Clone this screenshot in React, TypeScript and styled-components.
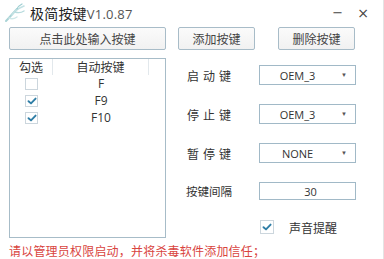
import React from "react";
import styled, { createGlobalStyle } from "styled-components";

const Global = createGlobalStyle`
  html, body { margin: 0; padding: 0; background: #fff; }
  body { width: 384px; height: 259px; overflow: hidden;
    font-family: "Microsoft YaHei", "Noto Sans CJK SC", "Noto Sans", sans-serif; color: #333; }
  * { box-sizing: border-box; }
`;

const Window = styled.div`
  width: 384px; height: 259px; position: relative;
  border-right: 1px solid #e4e4e4;
  display: flex; flex-direction: column;
`;

const TitleBar = styled.div`
  height: 28px; display: flex; align-items: center; padding: 0 0 2px 4px;
`;
const Title = styled.div`
  margin-left: 4px; font-size: 14px; color: #222; letter-spacing: 0.2px;
  span { color: #555; font-family: "Open Sans", "Noto Sans", sans-serif; font-size: 13px; }
`;
const WinCtrls = styled.div`
  margin-left: auto; display: flex; gap: 14px; padding-right: 14px; align-items: center;
  color: #444; font-family: "DejaVu Sans", sans-serif;
`;
const Ctrl = styled.span<{ $size: number }>`
  font-size: ${p => p.$size}px; line-height: 1;
`;

const ButtonRow = styled.div`
  display: flex; padding-left: 9px; height: 23px;
`;
const Btn = styled.button<{ $ml?: number; $w: number }>`
  width: ${p => p.$w}px; height: 23px; margin-left: ${p => p.$ml ?? 0}px;
  border: 1px solid #a8bcc8; border-radius: 2px;
  background: linear-gradient(#fbfbfb, #f1f1f1);
  font-family: inherit; font-size: 12px; color: #444; padding: 0;
`;

const Main = styled.div`
  display: flex; margin-top: 8px; height: 180px;
`;

const ListBox = styled.div`
  margin-left: 9px; width: 157px; height: 180px;
  border: 1px solid #a7bcc8; background: #fff;
  display: flex; flex-direction: column;
`;
const Row = styled.div<{ $header?: boolean }>`
  display: grid; grid-template-columns: 43px 96px 1fr;
  height: ${p => (p.$header ? 16 : 17)}px; align-items: center;
  font-size: 12px; color: #333;
`;
const HeadCell = styled.div<{ $sep?: boolean }>`
  height: 100%; display: flex; align-items: center; justify-content: center;
  border-right: ${p => (p.$sep ? "1px solid #e2e8ec" : "none")};
  line-height: 1;
`;
const Cell = styled.div`
  display: flex; align-items: center; justify-content: center;
  font-family: "Open Sans", "Noto Sans", sans-serif; font-size: 12px;
`;
const CheckCell = styled.div`
  display: flex; align-items: center; justify-content: center;
`;

const Box = styled.div`
  width: 13px; height: 12px; border: 1px solid #ccd6dd; background: #fff;
  display: flex; align-items: center; justify-content: center;
`;

const Tick = () => (
  <svg width="10" height="8" viewBox="0 0 10 8">
    <path d="M1.5 4.2 L4 6.4 L8.6 1.6" fill="none" stroke="#2f7ea6" strokeWidth="1.9" strokeLinecap="round" strokeLinejoin="round" />
  </svg>
);

const Check = ({ on }: { on: boolean }) => <Box>{on && <Tick />}</Box>;

const Panel = styled.div`
  margin-left: 12px; padding-top: 7px;
  display: grid; grid-template-columns: 81px 97px;
  grid-template-rows: 20px 20px 20px 18px 16px;
  row-gap: 19px;
  align-items: center;
`;
const Label = styled.div<{ $spaced?: boolean }>`
  padding-left: ${p => (p.$spaced ? 9 : 8)}px;
  font-size: ${p => (p.$spaced ? 12 : 11.5)}px;
  letter-spacing: ${p => (p.$spaced ? 4 : 0)}px; color: #333;
`;
const Select = styled.div`
  height: 20px; border: 1px solid #a1b9c7; background: #fff;
  display: flex; align-items: center;
  font-family: "Open Sans", "Noto Sans", sans-serif; font-size: 11px; color: #333;
`;
const SelText = styled.div`
  flex: 1; text-align: center; padding-left: 2px;
`;
const Arrow = styled.div`
  width: 22px; text-align: center; font-size: 6px; color: #555;
`;
const Input = styled.div`
  height: 18px; border: 1px solid #a1b9c7; background: #fff;
  display: flex; align-items: center; justify-content: center;
  font-family: "Open Sans", "Noto Sans", sans-serif; font-size: 11px; color: #333;
  padding-left: 6px;
`;
const SoundRow = styled.div`
  grid-column: 2; display: flex; align-items: center; gap: 15px; padding-left: 1px;
  font-size: 12px; color: #333;
`;
const BigBox = styled(Box)`
  width: 14px; height: 14px;
`;

const Warning = styled.div`
  margin: 4px 0 0 9px; font-size: 12px; color: #d9443e; letter-spacing: 0.2px;
`;

const Logo = () => (
  <svg width="22" height="20" viewBox="0 0 22 20">
    <path d="M2 18 C6 14, 9 10, 13 6" stroke="#a9d3d6" strokeWidth="2" fill="none" strokeLinecap="round" />
    <path d="M8 12 C10 8, 15 5, 20 3" stroke="#c4e2e4" strokeWidth="1.6" fill="none" strokeLinecap="round" />
    <path d="M11 9 C14 10, 17 10, 20 8" stroke="#b6dadd" strokeWidth="1.4" fill="none" strokeLinecap="round" />
    <path d="M5 15 C7 16, 10 16, 13 14" stroke="#cfe7e8" strokeWidth="1.4" fill="none" strokeLinecap="round" />
    <path d="M13 6 C14 3, 16 2, 18 1" stroke="#9ccdd1" strokeWidth="1.2" fill="none" strokeLinecap="round" />
  </svg>
);

const rows = [
  { key: "F", on: false },
  { key: "F9", on: true },
  { key: "F10", on: true },
];

export default function App() {
  return (
    <>
      <Global />
      <Window>
        <TitleBar>
          <Logo />
          <Title>
            极简按键<span>V1.0.87</span>
          </Title>
          <WinCtrls>
            <Ctrl $size={13}>−</Ctrl>
            <Ctrl $size={14}>×</Ctrl>
          </WinCtrls>
        </TitleBar>
        <ButtonRow>
          <Btn $w={157}>点击此处输入按键</Btn>
          <Btn $w={77} $ml={12}>添加按键</Btn>
          <Btn $w={77} $ml={23}>删除按键</Btn>
        </ButtonRow>
        <Main>
          <ListBox>
            <Row $header>
              <HeadCell $sep>勾选</HeadCell>
              <HeadCell $sep>自动按键</HeadCell>
              <HeadCell />
            </Row>
            {rows.map(r => (
              <Row key={r.key}>
                <CheckCell><Check on={r.on} /></CheckCell>
                <Cell>{r.key}</Cell>
                <div />
              </Row>
            ))}
          </ListBox>
          <Panel>
            <Label $spaced>启动键</Label>
            <Select><SelText>OEM_3</SelText><Arrow>▼</Arrow></Select>
            <Label $spaced>停止键</Label>
            <Select><SelText>OEM_3</SelText><Arrow>▼</Arrow></Select>
            <Label $spaced>暂停键</Label>
            <Select><SelText>NONE</SelText><Arrow>▼</Arrow></Select>
            <Label>按键间隔</Label>
            <Input>30</Input>
            <SoundRow>
              <BigBox><Tick /></BigBox>
              声音提醒
            </SoundRow>
          </Panel>
        </Main>
        <Warning>请以管理员权限启动，并将杀毒软件添加信任；</Warning>
      </Window>
    </>
  );
}
